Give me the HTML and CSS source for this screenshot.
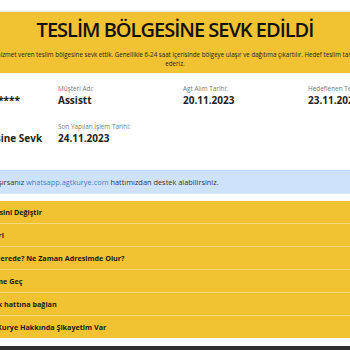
FILE: index.html
```html
<!DOCTYPE html>
<html lang="tr">
<head>
    <meta charset="UTF-8">
    <title>Kargo Takip</title>
    <link rel="stylesheet" href="styles.css">
</head>
<body>
    <div class="wrap">
        <div class="status">
            <h1>TESLİM BÖLGESİNE SEVK EDİLDİ</h1>
            <p>Kargonuzu size en yakın hizmet veren teslim bölgesine sevk ettik. Genellikle 6-24 saat içerisinde bölgeye ulaşır ve dağıtıma çıkartılır. Hedef teslim tarihi akşamına kadar teslim ederiz.</p>
        </div>

        <div class="info">
            <div class="item">
                <span class="lbl">Takip No:</span>
                <b>AGT231124******</b>
            </div>
            <div class="item">
                <span class="lbl">Müşteri Adı:</span>
                <b>Assistt</b>
            </div>
            <div class="item">
                <span class="lbl">Agt Alım Tarihi:</span>
                <b>20.11.2023</b>
            </div>
            <div class="item">
                <span class="lbl">Hedeflenen Teslim Tarihi:</span>
                <b>23.11.2023</b>
            </div>
            <div class="item">
                <span class="lbl">Son Durum:</span>
                <b>Teslim Bölgesine Sevk</b>
            </div>
            <div class="item">
                <span class="lbl">Son Yapılan İşlem Tarihi:</span>
                <b>24.11.2023</b>
            </div>
        </div>

        <div class="alert">
            Herhangi bir sorunla karşılaşırsanız <a href="#">whatsapp.agtkurye.com</a> hattımızdan destek alabilirsiniz.
        </div>

        <ul class="menu">
            <li><a href="#">Alıcı Teslim Adresini Değiştir</a></li>
            <li><a href="#">Kargo Hareketleri</a></li>
            <li><a href="#">Kargo Paketim Nerede? Ne Zaman Adresimde Olur?</a></li>
            <li><a href="#">Teslimatı Erteleme Geç</a></li>
            <li><a href="#">Yardım ve destek hattına bağlan</a></li>
            <li><a href="#">Teslimat Yapan Kurye Hakkında Şikayetim Var</a></li>
        </ul>

        <div class="footer"></div>
    </div>
</body>
</html>
```

FILE: styles.css
```css
* {
    margin: 0;
    padding: 0;
    box-sizing: border-box;
}

body {
    display: flex;
    justify-content: center;
    overflow: hidden;
    font-family: "Open Sans", "Noto Sans", sans-serif;
    color: #111;
    background: #fff;
}

.wrap {
    width: 600px;
    flex-shrink: 0;
    padding-top: 12px;
}

.status {
    height: 61px;
    background: #f1c232;
    text-align: center;
    box-shadow: 0 -1px 2px rgba(0, 0, 0, .12);
    padding-top: 6px;
}

.status h1 {
    font-size: 20px;
    line-height: 24px;
    font-weight: 600;
    letter-spacing: -1px;
    color: #111;
}

.status p {
    width: 500px;
    margin: 8px auto 0;
    font-size: 6.2px;
    line-height: 9px;
    color: #222;
}

.info {
    width: 500px;
    margin: 0 auto;
    display: grid;
    grid-template-columns: repeat(4, 125px);
    row-gap: 14px;
    padding: 11px 0 24px;
}

.item {
    padding-left: 8px;
    display: flex;
    flex-direction: column;
    white-space: nowrap;
}

.lbl {
    font-size: 6.4px;
    line-height: 9px;
    color: #777;
}

.item b {
    font-size: 10px;
    line-height: 15px;
    font-weight: 700;
    color: #222;
}

.alert {
    height: 24px;
    background: #cfe2fc;
    border-top: 1px solid #bcd8f8;
    border-bottom: 1px solid #d6e6fb;
    font-size: 7.4px;
    line-height: 22px;
    color: #333;
    padding-left: 28px;
    white-space: nowrap;
}

.alert a {
    color: #3d7fd6;
    text-decoration: none;
}

.menu {
    list-style: none;
    margin-top: 7px;
}

.menu li {
    height: 23px;
    background: #f1c232;
    border-bottom: 1px solid #f6d77c;
    padding-left: 65px;
}

.menu li:last-child {
    height: 22px;
    border-bottom: 0;
}

.menu a {
    display: block;
    font-size: 7.2px;
    line-height: 22px;
    font-weight: 700;
    color: #1a1a1a;
    text-decoration: none;
    white-space: nowrap;
}

.footer {
    height: 40px;
    margin-top: 8px;
    background: #2f2f2f;
}
```
